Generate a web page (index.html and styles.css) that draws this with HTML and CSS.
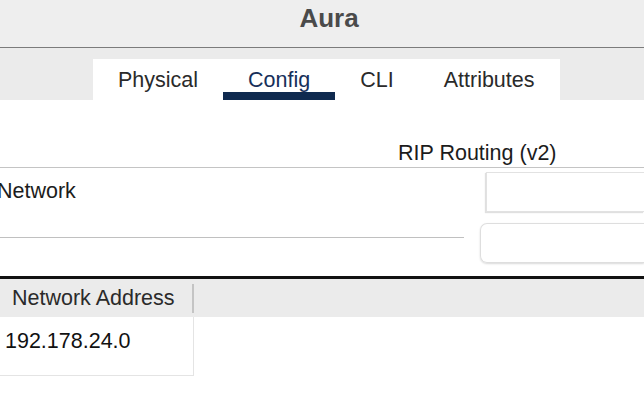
FILE: index.html
```html
<!DOCTYPE html>
<html>
<head>
<meta charset="utf-8">
<link rel="stylesheet" href="styles.css">
</head>
<body>
<div class="titlebar"><span class="title">Aura</span></div>
<div class="tabstrip">
  <div class="tabs">
    <div class="tab">Physical</div>
    <div class="tab active">Config</div>
    <div class="tab">CLI</div>
    <div class="tab">Attributes</div>
  </div>
</div>
<div class="content">
  <div class="rip-row"><span class="rip-title">RIP Routing (v2)</span></div>
  <div class="mid">
    <div class="left-col">
      <div class="net-label">Network</div>
    </div>
    <div class="right-col">
      <div class="input1"></div>
      <div class="input2"></div>
    </div>
  </div>
  <div class="table">
    <div class="thead">
      <div class="th">Network Address</div>
    </div>
    <div class="trow">
      <div class="td">192.178.24.0</div>
    </div>
  </div>
</div>
</body>
</html>
```
FILE: styles.css
```css
html, body {
  margin: 0;
  padding: 0;
  background: #ffffff;
  overflow: hidden;
}
body {
  width: 644px;
  height: 410px;
  font-family: "Liberation Sans", Arial, Helvetica, sans-serif;
  font-size: 21.5px;
  color: #1c1c1c;
}
.titlebar {
  height: 48px;
  box-sizing: border-box;
  padding-top: 3px;
  background: #eeeeee;
  border-bottom: 1px solid #7b7b7b;
  display: flex;
  justify-content: center;
  padding-left: 14px;
}
.title {
  font-weight: bold;
  font-size: 26px;
  line-height: 30px;
  color: #4a4a4a;
}
.tabstrip {
  background: #ebebeb;
  padding-top: 11px;
  padding-left: 93px;
  display: flex;
}
.tabs {
  background: #ffffff;
  display: flex;
  height: 41px;
}
.tab {
  box-sizing: border-box;
  height: 41px;
  padding: 9px 25px 0 25px;
  line-height: 24px;
  color: #2a2a2a;
  border-bottom: 8px solid transparent;
}
.tab.active {
  color: #17305a;
  border-bottom-color: #0f2a4f;
}
.content {
  background: #ffffff;
}
.rip-row {
  height: 68px;
  box-sizing: border-box;
  padding-top: 41px;
  padding-left: 398px;
  line-height: 24px;
  border-bottom: 1px solid #c4c4c4;
}
.mid {
  display: flex;
  height: 108px;
}
.left-col {
  width: 464px;
  flex: none;
}
.net-label {
  height: 70px;
  box-sizing: border-box;
  padding-top: 11px;
  margin-left: -3px;
  line-height: 24px;
  border-bottom: 1px solid #c0c0c0;
}
.right-col {
  flex: 1;
  padding-left: 16px;
  padding-top: 4px;
  display: flex;
  flex-direction: column;
  gap: 11px;
}
.input1 {
  height: 40px;
  margin-left: 6px;
  box-sizing: border-box;
  border: 1px solid #e2e2e2;
  border-right: none;
  box-shadow: -1px 1px 1px rgba(0,0,0,0.12);
}
.input2 {
  height: 40px;
  box-sizing: border-box;
  border: 1px solid #dedede;
  border-right: none;
  border-radius: 7px 0 0 7px;
  box-shadow: 0 1px 2px rgba(0,0,0,0.15);
}
.table {
  border-top: 3px solid #111111;
}
.thead {
  height: 38px;
  background: #ebebeb;
  display: flex;
  align-items: center;
}
.th {
  width: 194px;
  padding-left: 12px;
  line-height: 24px;
  height: 29px;
  box-sizing: border-box;
  padding-top: 2px;
  border-right: 2px solid #c4c4c4;
  color: #2a2a2a;
}
.trow {
  display: flex;
}
.td {
  width: 194px;
  height: 59px;
  box-sizing: border-box;
  padding-left: 5px;
  padding-top: 12px;
  line-height: 24px;
  border-right: 1px solid #e4e4e4;
  border-bottom: 1px solid #e4e4e4;
  color: #111111;
}
```
